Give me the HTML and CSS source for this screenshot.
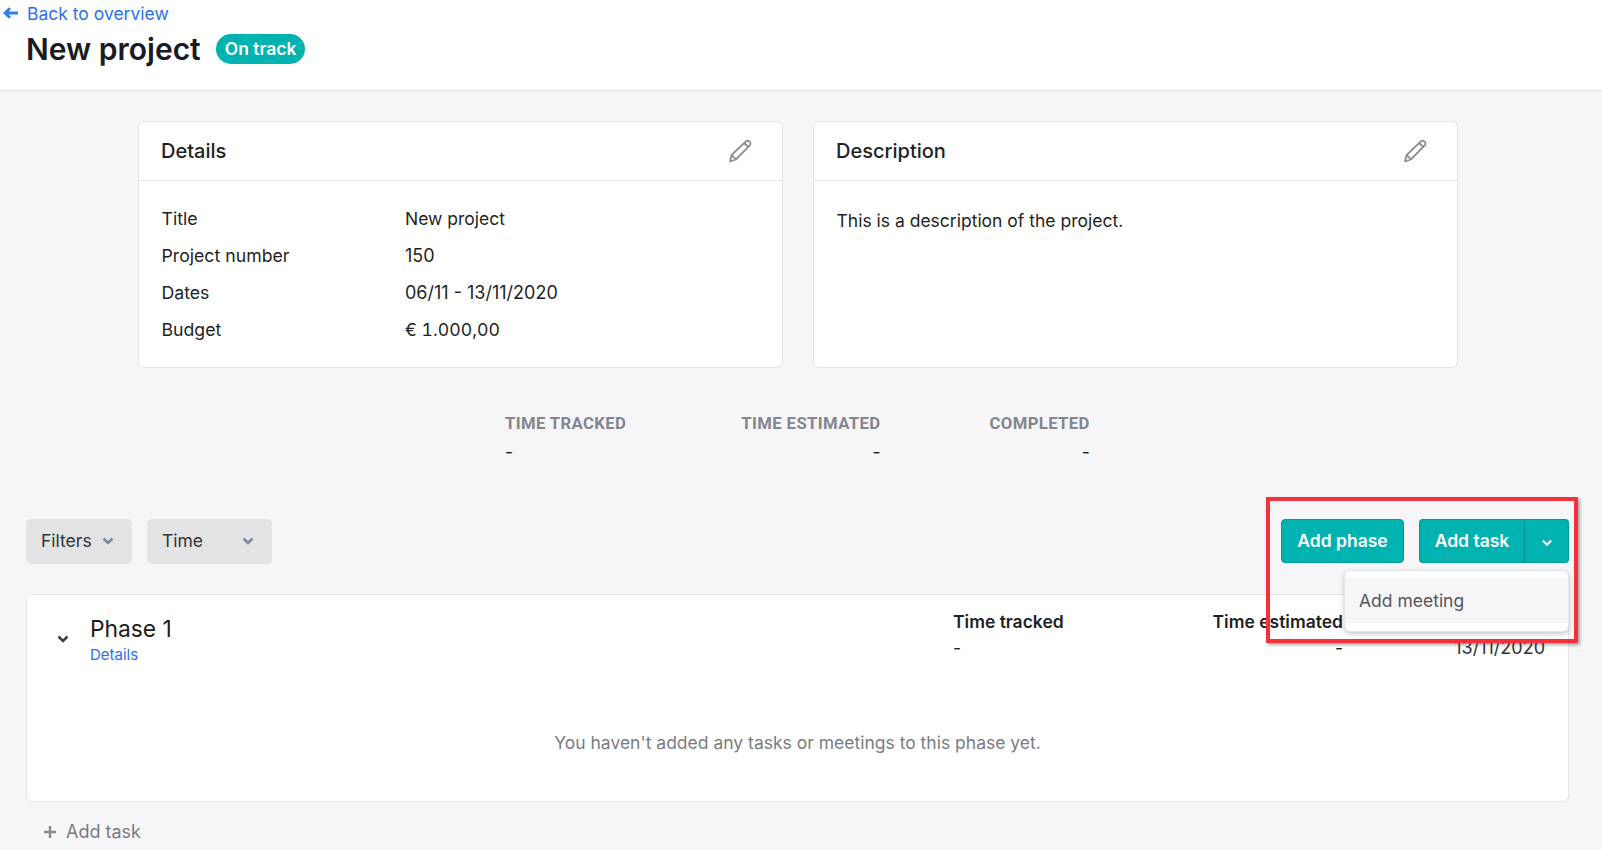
FILE: index.html
```html
<!DOCTYPE html>
<html lang="en">
<head>
<meta charset="utf-8">
<title>New project</title>
<link rel="stylesheet" href="styles.css">
</head>
<body>
<header class="page-header">
  <a class="back-link" href="#">
    <svg class="back-icon" width="16" height="12" viewBox="0 0 16 12"><path d="M15 6H3M7 1.200 2 6l5 4.800" fill="none" stroke="#2f80f5" stroke-width="2.800"/></svg>
    <span>Back to overview</span>
  </a>
  <div class="title-row">
    <h1 class="title">New project</h1>
    <span class="badge">On track</span>
  </div>
</header>
<main class="content">
  <section class="cards">
    <article class="card">
      <div class="card-head">
        <h2 class="card-title">Details</h2>
        <svg class="edit-icon" width="26" height="26" viewBox="0 0 26 26"><path d="M3 23.500l1.600-6.500L18.800 3.300a2.400 2.400 0 0 1 3.400 0l.6.6a2.400 2.400 0 0 1 0 3.400L8.800 21.500zM4.700 17l4.200 4.400M17.200 5l4.100 4" fill="none" stroke="#8d8d97" stroke-width="1.800" stroke-linejoin="round"/></svg>
      </div>
      <dl class="info">
        <dt>Title</dt><dd class="name">New project</dd>
        <dt>Project number</dt><dd>150</dd>
        <dt>Dates</dt><dd>06/11 - 13/11/2020</dd>
        <dt>Budget</dt><dd class="amount">€ 1.000,00</dd>
      </dl>
    </article>
    <article class="card">
      <div class="card-head">
        <h2 class="card-title">Description</h2>
        <svg class="edit-icon" width="26" height="26" viewBox="0 0 26 26"><path d="M3 23.500l1.600-6.500L18.800 3.300a2.400 2.400 0 0 1 3.400 0l.6.6a2.400 2.400 0 0 1 0 3.400L8.800 21.500zM4.700 17l4.200 4.400M17.200 5l4.100 4" fill="none" stroke="#8d8d97" stroke-width="1.800" stroke-linejoin="round"/></svg>
      </div>
      <p class="desc">This is a description of the project.</p>
    </article>
  </section>
  <section class="stats">
    <div class="stat stat-tracked"><div class="stat-label">TIME TRACKED</div><div class="stat-value">-</div></div>
    <div class="stat stat-estimated"><div class="stat-label">TIME ESTIMATED</div><div class="stat-value">-</div></div>
    <div class="stat stat-completed"><div class="stat-label">COMPLETED</div><div class="stat-value">-</div></div>
  </section>
  <section class="toolbar">
    <div class="filters">
      <button class="select select-filters">Filters
        <svg width="12" height="8" viewBox="0 0 12 8"><path d="M1.500 1.500 6 6l4.500-4.500" fill="none" stroke="#7d8a9c" stroke-width="2.600"/></svg>
      </button>
      <button class="select select-time">Time
        <svg width="12" height="8" viewBox="0 0 12 8"><path d="M1.500 1.500 6 6l4.500-4.500" fill="none" stroke="#7d8a9c" stroke-width="2.600"/></svg>
      </button>
    </div>
    <div class="actions">
      <button class="btn btn-phase">Add phase</button>
      <div class="split">
        <button class="btn btn-main">Add task</button>
        <button class="btn btn-caret"><svg width="12" height="8" viewBox="0 0 12 8"><path d="M1.800 1.500 6 5.800l4.200-4.300" fill="none" stroke="#fff" stroke-width="2.200"/></svg></button>
        <div class="menu"><div class="menu-item">Add meeting</div></div>
      </div>
    </div>
    <div class="annotation"></div>
  </section>
  <section class="phase">
    <div class="phase-head">
      <svg class="phase-caret" width="12" height="8" viewBox="0 0 12 8"><path d="M1.500 1.500 6 6l4.500-4.500" fill="none" stroke="#3d3d45" stroke-width="2.600"/></svg>
      <div class="phase-name">
        <div class="phase-title">Phase 1</div>
        <a class="phase-link" href="#">Details</a>
      </div>
      <div class="col col-tracked"><div class="col-label">Time tracked</div><div class="col-value">-</div></div>
      <div class="col col-estimated"><div class="col-label">Time estimated</div><div class="col-value">-</div></div>
      <div class="col col-date"><div class="col-value">13/11/2020</div></div>
    </div>
    <p class="empty">You haven't added any tasks or meetings to this phase yet.</p>
  </section>
  <div class="add-task">
    <svg width="14" height="14" viewBox="0 0 14 14"><path d="M7 1v12M1 7h12" stroke="#8a8a94" stroke-width="2.400"/></svg>
    <span>Add task</span>
  </div>
</main>
</body>
</html>
```
FILE: styles.css
```css
* { box-sizing: border-box; }
html, body { margin: 0; height: 100%; overflow: hidden; }
body { background: #f6f6f9; color: #1f1f24; font-family: Inter, sans-serif; font-size: 17.500px; }
h1, h2, p, dl, dd { margin: 0; }
button { font-family: inherit; border: 0; }

.page-header { height: 91px; background: #fff; border-bottom: 1px solid #e3e3e8; position: relative; }
.back-link { display: flex; align-items: center; height: 26px; color: #2c6fef; text-decoration: none; padding-left: 3px; }
.back-icon { margin-right: 8px; }
.title-row { display: flex; align-items: center; padding-left: 26px; margin-top: 3px; }
.title { font-size: 30px; font-weight: 600; line-height: 40px; color: #1a1a1f; }
.badge { margin-left: 15px; height: 30px; line-height: 30px; padding: 0 9px; border-radius: 15px; background: #00b2b0; color: #fff; font-size: 17.500px; font-weight: 600; }

.content { padding: 30px 33px 0 26px; }
.cards { display: flex; gap: 30px; padding: 0 111px 0 112px; }
.card { width: 645px; height: 247px; background: #fff; border: 1px solid #e3e3e8; border-radius: 6px; }
.card-head { height: 59px; display: flex; align-items: center; justify-content: space-between; padding: 0 29px 0 22px; border-bottom: 1px solid #e3e3e8; }
.card-title { font-size: 20px; font-weight: 500; color: #1f1f24; }
.info { display: grid; grid-template-columns: 243.500px 1fr; grid-auto-rows: 37px; align-items: center; padding: 19px 22px 0 22.500px; font-size: 17.700px; }
.info dd { font-size: 18px; }
.info .name { font-size: 17.500px; }
.info .amount { font-size: 17.700px; font-variant-numeric: tabular-nums; }
.desc { padding: 28px 22.500px 0; line-height: 24px; font-size: 17.500px; }

.stats { display: flex; height: 76px; margin-top: 46px; padding-left: 479px; }
.stat { display: flex; flex-direction: column; }
.stat-label { font-family: Roboto, sans-serif; font-weight: 700; font-size: 16.700px; line-height: 20px; color: #85858f; letter-spacing: .38px; }
.stat-value { line-height: 24px; margin-top: 6px; }
.stat-estimated { margin-left: 115px; text-align: right; }
.stat-completed { margin-left: 109px; text-align: right; }

.toolbar { display: flex; justify-content: space-between; margin-top: 29px; position: relative; height: 45px; }
.filters { display: flex; gap: 15px; }
.select { height: 45px; background: #e3e3e6; border-radius: 5px; font-size: 17.500px; color: #33333a; display: flex; align-items: center; justify-content: space-between; padding: 0 18px 2px 15px; }
.select-filters { width: 106px; }
.select-time { width: 125px; }
.actions { display: flex; gap: 15px; }
.btn { height: 44px; background: #00b2b0; color: #fff; font-size: 17.500px; font-weight: 600; border: 1px solid #009a98; border-radius: 4px; padding: 0 0 2px; white-space: nowrap; }
.btn-phase { width: 123px; }
.split { display: flex; position: relative; }
.btn-main { width: 106px; border-radius: 4px 0 0 4px; border-right: 1px solid #008f8d; }
.btn-caret { width: 44px; padding: 0 0 2px; border-left: 0; border-radius: 0 4px 4px 0; }
.menu { position: absolute; z-index: 2; top: 51px; right: 0; width: 225px; height: 62px; padding-top: 7px; background: #fff; border: 1px solid #e3e3e8; border-radius: 6px; box-shadow: 0 2px 5px rgba(40,40,60,.25); }
.menu-item { height: 45px; line-height: 45px; padding-left: 14px; background: #f6f6f9; color: #55555d; }
.annotation { position: absolute; z-index: 3; left: 1240px; top: -22px; width: 312px; height: 146px; border: 4px solid #f5303a; box-shadow: 2px 2px 3px rgba(60,60,60,.45); pointer-events: none; }

.phase { margin-top: 30px; height: 208px; background: #fff; border: 1px solid #e3e3e8; border-radius: 6px; }
.phase-head { display: flex; height: 70px; position: relative; }
.phase-caret { margin: 40px 0 0 30px; }
.phase-name { margin-left: 21px; padding-top: 18px; }
.phase-title { font-size: 22.800px; line-height: 32px; color: #1a1a1f; }
.phase-link { font-size: 15px; line-height: 20px; color: #2c6fef; text-decoration: none; display: block; }
.col { position: absolute; top: 15px; }
.col-label { font-weight: 600; line-height: 24px; }
.col-value { line-height: 24px; margin-top: 2px; }
.col-tracked { left: 926px; }
.col-estimated { right: 225px; text-align: right; }
.col-date { right: 23px; top: 41px; font-size: 18px; }
.col-date .col-value { margin-top: 0; color: #33333a; }
.empty { text-align: center; color: #7b7b85; line-height: 24px; margin-top: 66px; }

.add-task { display: flex; align-items: center; gap: 9px; margin-top: 18px; padding-left: 17px; color: #7b7b85; line-height: 24px; font-size: 18px; }
```
